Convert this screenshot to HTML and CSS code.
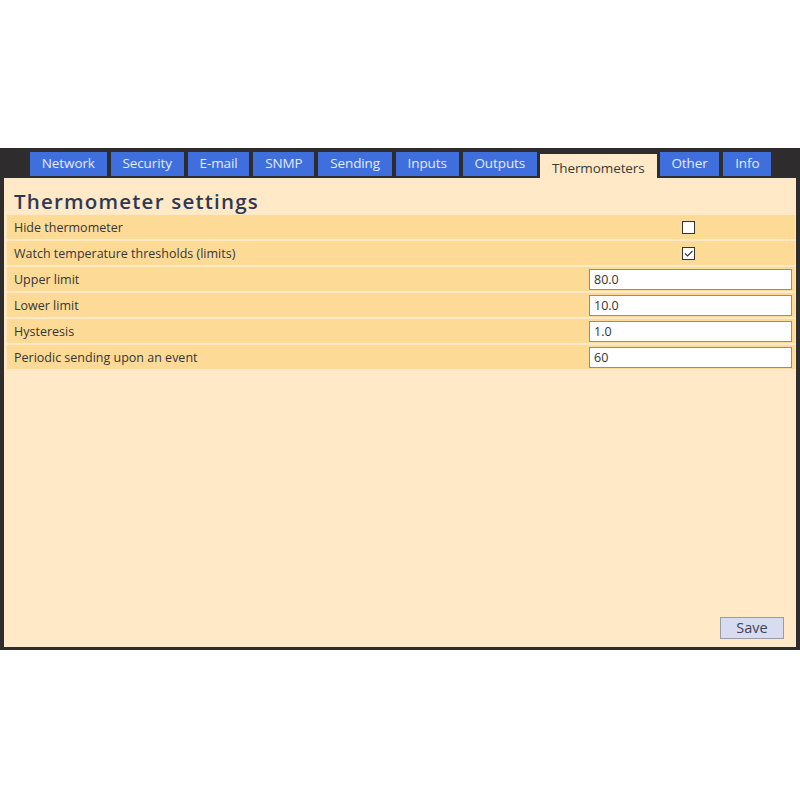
FILE: index.html
```html
<!DOCTYPE html>
<html lang="en">
<head>
<meta charset="utf-8">
<title>Thermometer settings</title>
<link rel="stylesheet" href="styles.css">
</head>
<body>
<div class="frame">
  <nav class="tabs">
    <a class="tab">Network</a>
    <a class="tab">Security</a>
    <a class="tab">E-mail</a>
    <a class="tab">SNMP</a>
    <a class="tab">Sending</a>
    <a class="tab">Inputs</a>
    <a class="tab">Outputs</a>
    <a class="tab active">Thermometers</a>
    <a class="tab">Other</a>
    <a class="tab">Info</a>
  </nav>
  <main class="panel">
    <h1 class="title">Thermometer settings</h1>
    <div class="rows">
      <div class="row">
        <span class="label">Hide thermometer</span>
        <span class="value center"><span class="check"></span></span>
      </div>
      <div class="row">
        <span class="label">Watch temperature thresholds (limits)</span>
        <span class="value center"><span class="check on"><svg viewBox="0 0 13 13" width="13" height="13"><path d="M3 6.5 L5.5 9 L10.5 4" fill="none" stroke="#333" stroke-width="1.1"/></svg></span></span>
      </div>
      <div class="row">
        <span class="label">Upper limit</span>
        <span class="value"><input class="field" type="text" value="80.0"></span>
      </div>
      <div class="row">
        <span class="label">Lower limit</span>
        <span class="value"><input class="field" type="text" value="10.0"></span>
      </div>
      <div class="row">
        <span class="label">Hysteresis</span>
        <span class="value"><input class="field" type="text" value="1.0"></span>
      </div>
      <div class="row">
        <span class="label">Periodic sending upon an event</span>
        <span class="value"><input class="field" type="text" value="60"></span>
      </div>
    </div>
    <div class="actions">
      <button class="save" type="button">Save</button>
    </div>
  </main>
</div>
</body>
</html>
```
FILE: styles.css
```css
html, body {
  margin: 0;
  padding: 0;
  background: #ffffff;
}

body {
  font-family: "Open Sans", "Noto Sans", sans-serif;
  color: #333333;
}

.frame {
  margin-top: 148px;
  background: #2e2c2c;
  padding: 0 4px 3px 4px;
}

/* tab strip: blue tabs sit on the dark bar, the current one joins the panel */
.tabs {
  display: flex;
  align-items: flex-start;
  gap: 4px;
  padding: 4px 0 0 26px;
  height: 30px;
  box-sizing: border-box;
}

.tab {
  display: flex;
  align-items: center;
  justify-content: center;
  height: 24px;
  padding: 0 11.8px 2px 11.8px;
  box-sizing: border-box;
  background: #3f6fdd;
  color: #e4ebfb;
  font-size: 13.5px;
  letter-spacing: -0.1px;
  white-space: nowrap;
  cursor: pointer;
}

.tab.active {
  height: 24px;
  margin: 2px -1px 0 -1px;
  padding: 4px 12px 0 12px;
  background: #ffe9c6;
  color: #3a3a3a;
}

.panel {
  display: flex;
  flex-direction: column;
  height: 469px;
  box-sizing: border-box;
  background: #ffe9c6;
  padding: 0 1px 0 3px;
}

.title {
  margin: 0;
  height: 37px;
  padding: 11px 0 0 7px;
  box-sizing: border-box;
  font-size: 20.5px;
  line-height: 24px;
  font-weight: 600;
  letter-spacing: 1.2px;
  color: #2d3a56;
}

.rows {
  display: flex;
  flex-direction: column;
  gap: 2px;
}

.row {
  display: grid;
  grid-template-columns: 1fr 206px;
  align-items: center;
  height: 24px;
  background: #fdda96;
}

.label {
  padding-left: 7px;
  font-size: 12.5px;
  color: #363636;
}

.value {
  display: flex;
  align-items: center;
}

.value.center {
  justify-content: center;
  padding-right: 7px;
}

.check {
  display: block;
  width: 13px;
  height: 13px;
  box-sizing: border-box;
  border: 1px solid #333333;
  background: #ffffff;
}

.check svg {
  display: block;
  margin: -1px;
}

.field {
  width: 203px;
  height: 21px;
  box-sizing: border-box;
  margin: 1px 0 0 0;
  border: 1px solid #8f8f8f;
  background: #ffffff;
  padding: 0 4px;
  font-family: "Open Sans", "Noto Sans", sans-serif;
  font-size: 12.5px;
  color: #333333;
  outline: none;
}

.actions {
  margin-top: auto;
  display: flex;
  justify-content: flex-end;
  padding: 0 11px 8px 0;
}

.save {
  width: 64px;
  height: 22px;
  box-sizing: border-box;
  border: 1px solid #9a9ca6;
  background: #d7dcf1;
  color: #3e4357;
  font-family: "Open Sans", "Noto Sans", sans-serif;
  font-size: 14.5px;
  line-height: 18px;
  padding: 0;
  cursor: pointer;
}
```
